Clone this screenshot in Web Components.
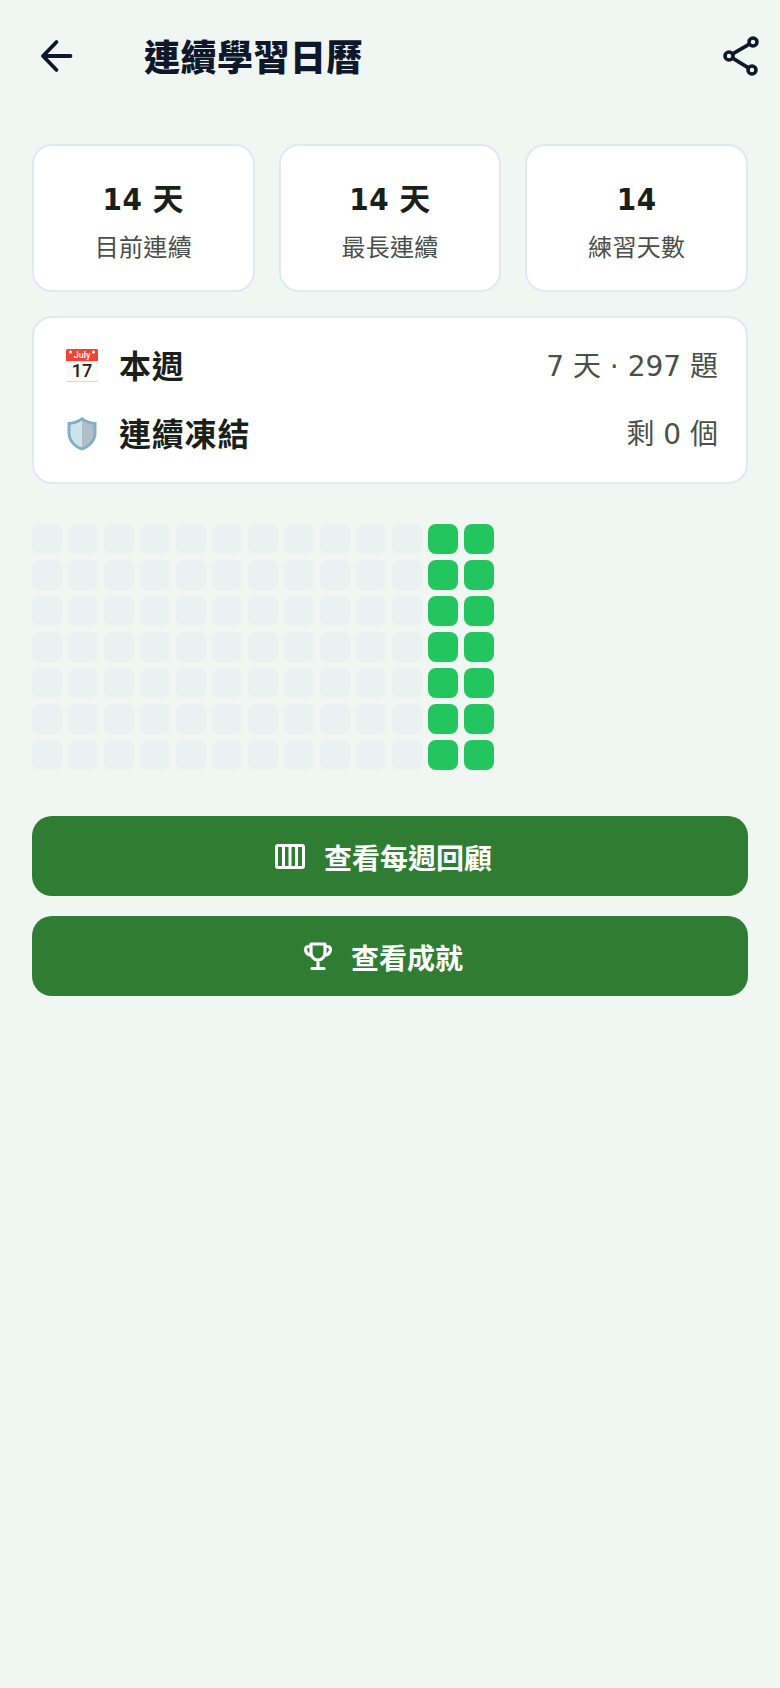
<!doctype html>
<html lang="zh-Hant"><head><meta charset="utf-8"><title>連續學習日曆</title>
<style>
html,body{margin:0;padding:0;background:#F0F6F2;font-family:"Noto Sans CJK TC","Noto Sans",sans-serif}
body{min-height:1688px}
main{display:block}
</style></head><body>
<template id="t-header"><style>
:host{display:flex;align-items:center;height:112px;padding:0 19px 0 36px;box-sizing:border-box;color:#0F172A}
svg{display:block;flex:none}
h1{margin:-2px 0 0 68px;flex:1;font-size:36px;line-height:48px;font-weight:900;letter-spacing:.5px;color:#0F172A}
</style>
<svg width="40" height="40" viewBox="0 0 40 40" fill="none" stroke="#0F172A" stroke-width="3.800" stroke-linecap="round" stroke-linejoin="round"><path d="M34.500 20H7M20.500 6 7 20 20.500 34"/></svg>
<h1><slot></slot></h1>
<svg width="40" height="48" viewBox="0 0 40 48" fill="none" stroke="#0F172A" stroke-width="3.600"><circle cx="32" cy="10" r="4"/><circle cx="8" cy="24" r="4"/><circle cx="31" cy="38" r="4"/><path d="M12 21.600 28 12.400M12 26.400 27 35.600"/></svg>
</template>

<template id="t-stat"><style>
:host{display:flex;flex-direction:column;align-items:center;justify-content:center;flex:1 1 0;height:148px;box-sizing:border-box;background:#fff;border:2px solid #E2E8F0;border-radius:20px;color:#1A1F1A}
.v{font-family:"DejaVu Sans Condensed","DejaVu Sans","Noto Sans CJK TC",sans-serif;font-stretch:condensed;font-size:31px;line-height:44px;font-weight:700;white-space:pre;letter-spacing:.5px;margin-top:4px}
.l{font-size:24px;line-height:34px;color:#4A4F4A;margin-top:8px;letter-spacing:.3px}
</style><div class="v"><slot name="value"></slot></div><div class="l"><slot name="label"></slot></div></template>

<template id="t-info"><style>
:host{display:block;box-sizing:border-box;height:168px;margin-top:24px;padding:15px 28px 15px 30px;background:#fff;border:2px solid #E2E8F0;border-radius:20px}
</style><slot></slot></template>

<template id="t-row"><style>
:host{display:flex;align-items:center;height:64px;margin-bottom:4px}
.i{width:36px;height:36px;flex:none;margin-right:19px}
.t{flex:1;font-size:32px;font-weight:700;line-height:44px;color:#1A1F1A;letter-spacing:.8px;margin-top:-2px}
.r{font-family:"DejaVu Sans","Noto Sans CJK TC",sans-serif;font-size:28px;line-height:40px;color:#4A4F4A;white-space:pre;margin-top:4px}
::slotted(svg){display:block}
</style><div class="i"><slot name="icon"></slot></div><div class="t"><slot name="title"></slot></div><div class="r"><slot name="value"></slot></div></template>

<template id="t-grid"><style>
:host{display:grid;grid-template-columns:repeat(13,30px);grid-auto-rows:30px;gap:6px;margin-top:40px}
i{display:block;border-radius:8px;background:#E9F1F1}
i.on{background:#22C55E}
</style><div id="g" style="display:contents"></div></template>

<template id="t-btn"><style>
:host{display:flex;align-items:center;justify-content:center;height:80px;box-sizing:border-box;padding:2px 14px 0 0;background:#2E7D32;border-radius:20px;color:#fff;font-size:28px;font-weight:700;line-height:40px}
.i{display:flex;margin-right:18px;margin-top:-2px}
::slotted(svg){display:block}
</style><span class="i"><slot name="icon"></slot></span><slot></slot></template>

<main>
<app-header>連續學習日曆</app-header>
<section style="padding:32px 32px 0">
  <div style="display:flex;gap:24px">
    <stat-card><span slot="value">14 天</span><span slot="label">目前連續</span></stat-card>
    <stat-card><span slot="value">14 天</span><span slot="label">最長連續</span></stat-card>
    <stat-card><span slot="value">14</span><span slot="label">練習天數</span></stat-card>
  </div>
  <info-card>
    <info-row>
      <svg slot="icon" width="36" height="36" viewBox="0 0 36 36" aria-hidden="true"><rect x="2" y="2" width="32" height="33" rx="1.500" fill="#CFD8DC"/><rect x="2" y="2" width="32" height="32" rx="1.500" fill="#FAFAFA"/><path d="M2 14V3.500A1.500 1.500 0 0 1 3.500 2h29A1.500 1.500 0 0 1 34 3.500V14z" fill="#F44336"/><circle cx="6.500" cy="5" r="1.500" fill="#fff"/><circle cx="29.500" cy="5" r="1.500" fill="#fff"/><text x="18" y="10.500" text-anchor="middle" font-family="Roboto,sans-serif" font-size="9" font-weight="500" fill="#fff">July</text><text x="18" y="29.500" text-anchor="middle" font-family="Roboto,sans-serif" font-size="18" font-weight="500" fill="#212121">17</text></svg>
      <span slot="title">本週</span><span slot="value">7 天 · 297 題</span>
    </info-row>
    <info-row>
      <svg slot="icon" width="36" height="36" viewBox="0 -0.500 36 36" aria-hidden="true"><path d="M18 1.500C14 5 8.500 6.500 3.500 6.500V17c0 9 6 15 14.500 18C26.500 32 32.500 26 32.500 17V6.500C27.500 6.500 22 5 18 1.500z" fill="#84AEC2"/><path d="M18 5C14.500 7.600 10 9 6.500 9.200V17c0 7.500 5 12.500 11.500 15z" fill="#CFE3EB"/><path d="M18 5c3.500 2.600 8 4 11.500 4.200V17c0 7.500-5 12.500-11.500 15z" fill="#B0BEC9"/></svg>
      <span slot="title">連續凍結</span><span slot="value">剩 0 個</span>
    </info-row>
  </info-card>
  <streak-grid></streak-grid>
  <div style="display:flex;flex-direction:column;gap:20px;margin-top:46px">
    <action-button><svg slot="icon" width="32" height="28" viewBox="0 0 32 28" fill="none" stroke="#fff" stroke-width="3" stroke-linejoin="round"><rect x="2.500" y="3.500" width="27" height="22" rx="1.500"/><path d="M9.500 3.500v22M16 3.500v22M22.500 3.500v22"/></svg>查看每週回顧</action-button>
    <action-button><svg slot="icon" width="30" height="30" viewBox="0 0 30 30" fill="none" stroke="#fff" stroke-width="3.200" stroke-linecap="round" stroke-linejoin="round"><path d="M8 3h14v9a7 7 0 0 1-14 0zM8 5.500H5a3 3 0 0 0-2.500 3.500C3 12 5 14 8.500 14.500M22 5.500h3A3 3 0 0 1 27.500 9C27 12 25 14 21.500 14.500M15 19v8M9 27.500h12"/></svg>查看成就</action-button>
  </div>
</section>
</main>
<script>
function def(name,tid,init){customElements.define(name,class extends HTMLElement{constructor(){super();const s=this.attachShadow({mode:"open"});s.appendChild(document.getElementById(tid).content.cloneNode(true));if(init)init(s)}})}
def("app-header","t-header");
def("stat-card","t-stat");
def("info-card","t-info");
def("info-row","t-row");
def("streak-grid","t-grid",s=>{const g=s.getElementById("g");for(let r=0;r<7;r++)for(let c=0;c<13;c++){const i=document.createElement("i");if(c>=11)i.className="on";g.appendChild(i)}});
def("action-button","t-btn");
</script>
</body></html>
